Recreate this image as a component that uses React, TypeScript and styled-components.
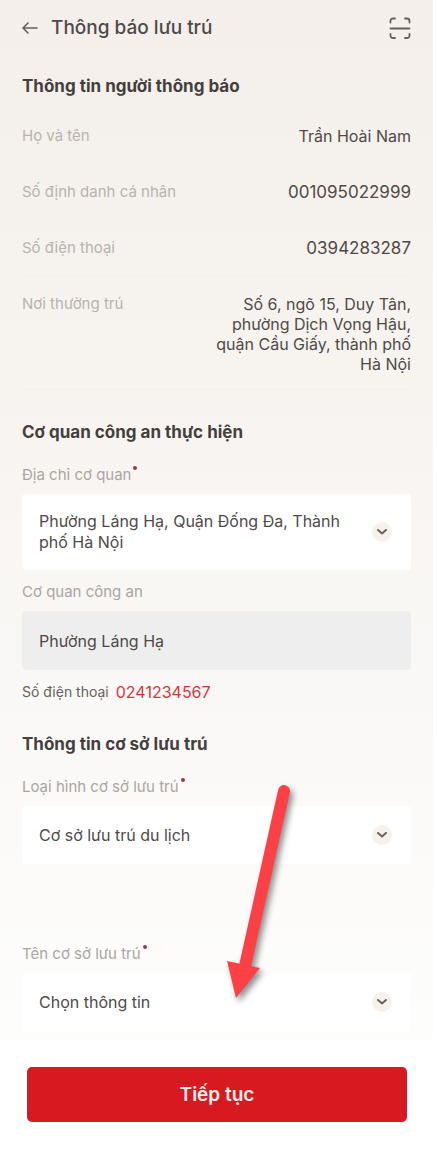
import React, { useState } from 'react';
import styled, { createGlobalStyle } from 'styled-components';

const GlobalStyle = createGlobalStyle`
  *, *::before, *::after { box-sizing: border-box; }
  body {
    margin: 0;
    background: #ffffff;
    font-family: Inter, "Noto Sans", sans-serif;
    color: #4f4a48;
    -webkit-font-smoothing: antialiased;
  }
`;

const Page = styled.div`
  padding-right: 4px;
`;

const Content = styled.main`
  padding: 12px 22px 10px;
  background: linear-gradient(180deg, #f4efea 0%, #f7f3ef 35%, #faf8f6 65%, #fdfdfc 100%);
`;

const Header = styled.header`
  display: flex;
  align-items: center;
  gap: 12px;
  height: 32px;
`;

const IconButton = styled.button`
  display: flex;
  padding: 0;
  border: 0;
  background: none;
  color: #66615e;
`;

const PageTitle = styled.h1`
  flex: 1;
  margin: 0;
  font-size: 19px;
  line-height: 24px;
  font-weight: 500;
`;

const SectionTitle = styled.h2<{ $top: number }>`
  margin: ${(p) => p.$top}px 0 0;
  font-size: 17px;
  line-height: 24px;
  font-weight: 700;
  color: #443f3d;
`;

const InfoList = styled.dl`
  margin: 10px 0 0;
`;

const InfoRow = styled.div<{ $line?: boolean }>`
  display: flex;
  justify-content: space-between;
  padding: 18px 0 15px;
  border-bottom: 1px solid ${(p) => (p.$line ? '#f3efeb' : 'transparent')};
  min-height: 56px;
`;

const InfoLabel = styled.dt`
  font-size: 15px;
  line-height: 20px;
  color: #b8b3af;
`;

const InfoValue = styled.dd<{ $wide?: boolean }>`
  max-width: 204px;
  margin: 0;
  font-size: ${(p) => (p.$wide ? 17 : 16)}px;
  line-height: 20px;
  text-align: right;
`;

const Field = styled.div<{ $top: number }>`
  display: flex;
  flex-direction: column;
  gap: 9px;
  margin-top: ${(p) => p.$top}px;
`;

const Label = styled.label`
  display: flex;
  gap: 2px;
  font-size: 15px;
  line-height: 20px;
  color: #aaa5a1;
`;

const Required = styled.span`
  width: 4px;
  height: 4px;
  margin-top: 1px;
  border-radius: 50%;
  background: #9c3a42;
`;

const SelectBox = styled.div`
  display: grid;
  align-items: center;
  min-height: 58px;
  border-radius: 4px;
  background: #ffffff;
  > * { grid-area: 1 / 1; }
`;

const Select = styled.select<{ $hideText?: boolean }>`
  appearance: none;
  width: 100%;
  height: 100%;
  padding: 0 56px 0 17px;
  border: 0;
  border-radius: 4px;
  background: transparent;
  font: 400 16px/21px Inter, "Noto Sans", sans-serif;
  color: ${(p) => (p.$hideText ? 'transparent' : '#4f4a48')};
  option { color: #4f4a48; }
`;

const SelectedText = styled.span`
  padding: 17px 56px 17px 17px;
  font-size: 16px;
  line-height: 21px;
  color: #4f4a48;
`;

const Knob = styled.span`
  display: grid;
  place-items: center;
  justify-self: end;
  width: 20px;
  height: 20px;
  margin-right: 19px;
  border-radius: 50%;
  background: #f6f1eb;
  pointer-events: none;
`;

const ReadOnlyInput = styled.input`
  width: 100%;
  height: 59px;
  padding: 0 17px;
  border: 0;
  border-radius: 4px;
  background: #eeeeee;
  font: 400 16px/21px Inter, "Noto Sans", sans-serif;
  color: #4f4a48;
`;

const Phone = styled.p`
  display: flex;
  gap: 7px;
  margin: 12px 0 0;
  font-size: 14px;
  line-height: 20px;
  color: #66615e;
`;

const PhoneLink = styled.a`
  font-size: 16px;
  color: #d8343c;
  text-decoration: none;
`;

const Lodging = styled.section`
  position: relative;
`;

const Pointer = styled.svg`
  position: absolute;
  top: 52px;
  left: 50%;
  margin-left: 4px;
  overflow: visible;
  pointer-events: none;
  filter: drop-shadow(3px 4px 3px rgba(0, 0, 0, 0.45));
`;

const Footer = styled.footer`
  padding: 26px 26px 28px 27px;
  background: #ffffff;
`;

const SubmitButton = styled.button`
  display: block;
  width: 100%;
  height: 55px;
  border: 0;
  border-radius: 5px;
  background: #d71920;
  color: #fdeeee;
  font: 600 19px/24px Inter, "Noto Sans", sans-serif;
`;

function BackIcon() {
  return (
    <svg width="17" height="16" viewBox="0 0 17 16" fill="none" stroke="currentColor" strokeWidth="1.6" strokeLinecap="round" strokeLinejoin="round">
      <path d="M15 8H1M6 3L1 8l5 5" />
    </svg>
  );
}

function ScanIcon() {
  return (
    <svg width="22" height="22" viewBox="0 0 22 22" fill="none" stroke="currentColor" strokeWidth="1.8" strokeLinecap="round">
      <path d="M1.5 5.500V4a2.500 2.500 0 0 1 2.500-2.500H6M16 1.500h2a2.500 2.500 0 0 1 2.500 2.500V5.500M20.500 17v1.500a2.500 2.500 0 0 1-2.500 2.500H16M6 21H4a2.500 2.500 0 0 1-2.500-2.500V17M1.500 11.500h19" />
    </svg>
  );
}

function Chevron() {
  return (
    <Knob>
      <svg width="12" height="6" viewBox="0 0 12 6" fill="none" stroke="#6a625e" strokeWidth="2" strokeLinecap="round" strokeLinejoin="round">
        <path d="M2 1L6 4.400L10 1" />
      </svg>
    </Knob>
  );
}

type SelectFieldProps = { id: string; label: string; options: string[]; top: number; wrap?: boolean };

function SelectField({ id, label, options, top, wrap }: SelectFieldProps) {
  const [value, setValue] = useState(options[0]);
  return (
    <Field $top={top}>
      <Label htmlFor={id}>
        {label}
        <Required />
      </Label>
      <SelectBox>
        {wrap && <SelectedText aria-hidden="true">{value}</SelectedText>}
        <Select id={id} $hideText={wrap} value={value} onChange={(e) => setValue(e.target.value)}>
          {options.map((o) => (
            <option key={o}>{o}</option>
          ))}
        </Select>
        <Chevron />
      </SelectBox>
    </Field>
  );
}

const person = [
  { label: 'Họ và tên', value: 'Trần Hoài Nam' },
  { label: 'Số định danh cá nhân', value: '001095022999', wide: true },
  { label: 'Số điện thoại', value: '0394283287', wide: true, line: true },
  { label: 'Nơi thường trú', value: 'Số 6, ngõ 15, Duy Tân, phường Dịch Vọng Hậu, quận Cầu Giấy, thành phố Hà Nội', line: true },
];

export default function App() {
  return (
    <Page>
      <GlobalStyle />
      <Content>
        <Header>
          <IconButton type="button" aria-label="Quay lại"><BackIcon /></IconButton>
          <PageTitle>Thông báo lưu trú</PageTitle>
          <IconButton type="button" aria-label="Quét mã"><ScanIcon /></IconButton>
        </Header>

        <section>
          <SectionTitle $top={30}>Thông tin người thông báo</SectionTitle>
          <InfoList>
            {person.map((p) => (
              <InfoRow key={p.label} $line={p.line}>
                <InfoLabel>{p.label}</InfoLabel>
                <InfoValue $wide={p.wide}>{p.value}</InfoValue>
              </InfoRow>
            ))}
          </InfoList>
        </section>

        <section>
          <SectionTitle $top={30}>Cơ quan công an thực hiện</SectionTitle>
          <SelectField id="address" label="Địa chỉ cơ quan" top={21} wrap options={['Phường Láng Hạ, Quận Đống Đa, Thành phố Hà Nội']} />
          <Field $top={12}>
            <Label htmlFor="office">Cơ quan công an</Label>
            <ReadOnlyInput id="office" readOnly value="Phường Láng Hạ" />
          </Field>
          <Phone>
            Số điện thoại <PhoneLink href="tel:0241234567">0241234567</PhoneLink>
          </Phone>
        </section>

        <Lodging>
          <SectionTitle $top={30}>Thông tin cơ sở lưu trú</SectionTitle>
          <SelectField id="kind" label="Loại hình cơ sở lưu trú" top={21} options={['Cơ sở lưu trú du lịch']} />
          <SelectField id="name" label="Tên cơ sở lưu trú" top={80} options={['Chọn thông tin']} />
          <Pointer width="68" height="216" viewBox="0 0 68 216" aria-hidden="true">
            <path d="M63 7L24 182" stroke="#fb4146" strokeWidth="12" strokeLinecap="round" />
            <path d="M6 177L39 184L15 214Z" fill="#fb4146" />
          </Pointer>
        </Lodging>
      </Content>
      <Footer>
        <SubmitButton type="button">Tiếp tục</SubmitButton>
      </Footer>
    </Page>
  );
}
